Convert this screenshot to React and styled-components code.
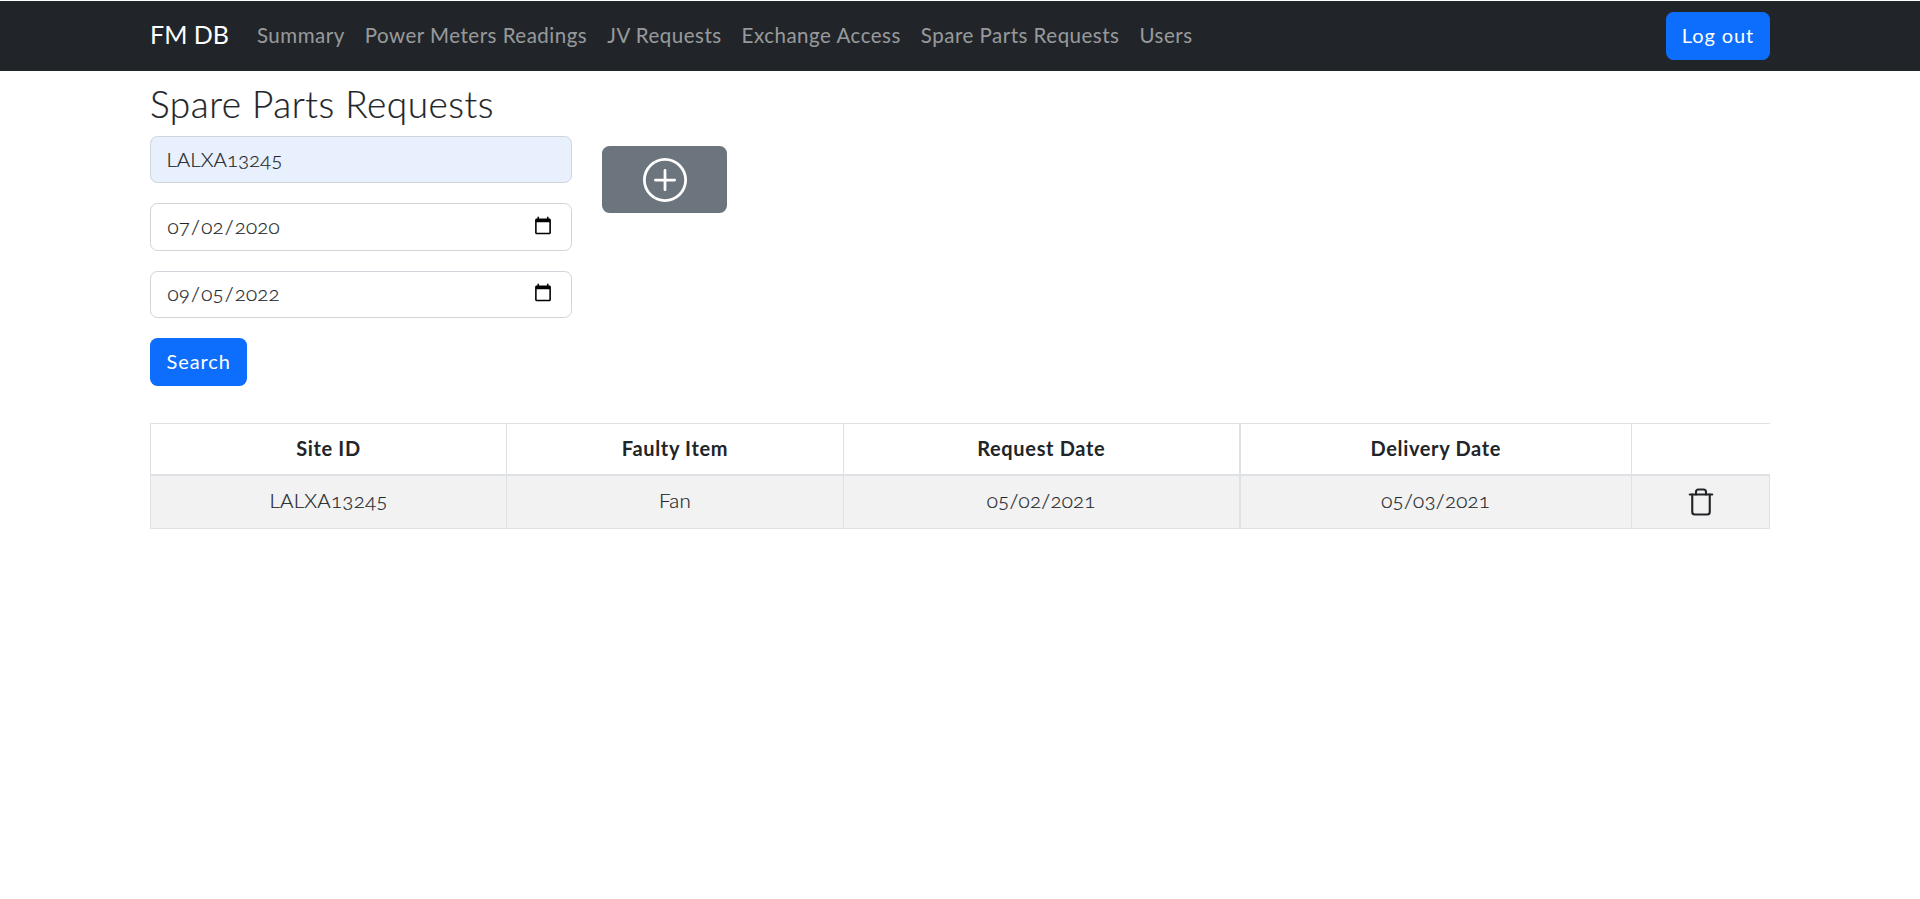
import React from 'react'
import styled, { createGlobalStyle } from 'styled-components'
import { BsPlusCircle } from 'react-icons/bs'
import { Trash } from 'lucide-react'

const GlobalStyle = createGlobalStyle`
    html { font-size: 20px; }
    body {
        margin: 0;
        background: #fff;
        color: #212529;
        font-family: Lato, "Open Sans", sans-serif;
        font-size: 20px;
        line-height: 1.5;
        font-variant-numeric: oldstyle-nums;
    }
`

const Navbar = styled.nav`
    margin-top: 1px;
    height: 70px;
    background-color: #212529;
`

const Container = styled.div`
    width: 1620px;
    margin: 0 auto;
`

const NavInner = styled(Container)`
    height: 100%;
    display: flex;
    align-items: center;
`

const Brand = styled.a`
    color: #fff;
    font-size: 25px;
    margin-right: 18px;
    padding-bottom: 2px;
`

const NavLink = styled.a`
    color: rgba(255,255,255,0.55);
    padding: 0 10px 2px;
    font-size: 20.5px;
    letter-spacing: 0.5px;
`

const Button = styled.button`
    height: 48px;
    padding: 0 16.5px 2px;
    border: none;
    border-radius: 7.5px;
    color: #fff;
    background-color: #0d6efd;
    font: inherit;
    letter-spacing: 0.9px;
`

const LogOut = styled(Button)`
    width: 104px;
    margin-left: auto;
    padding: 0 0 2px;
`

const Title = styled.h3`
    margin: 12px 0 11px;
    font-size: 37px;
    font-weight: 300;
    line-height: 42px;
    letter-spacing: 0.5px;
    -webkit-text-stroke: 0.2px;
`

const FormRow = styled.div`
    display: flex;
    align-items: flex-start;
    gap: 30px;
`

const SearchForm = styled.form`
    width: 422px;
    display: flex;
    flex-direction: column;
    align-items: flex-start;
    gap: 20px;
`

const Input = styled.input`
    box-sizing: border-box;
    width: 100%;
    height: 47.33px;
    padding: 0 16px 2px 15.5px;
    border: 1px solid #ced4da;
    border-radius: 7.5px;
    color: #212529;
    background-color: ${props => props.$filled ? '#e8f0fe' : '#fff'};
    font: inherit;
    font-size: 20.5px;
    font-weight: 300;
    font-variant-numeric: oldstyle-nums;
    letter-spacing: ${props => props.$filled ? '0' : '0.2px'};
    -webkit-text-stroke: 0.2px;
`

const AddButton = styled.button`
    width: 125px;
    height: 67px;
    margin-top: 10px;
    padding: 0;
    display: flex;
    align-items: center;
    justify-content: center;
    border: none;
    border-radius: 7.5px;
    color: #fff;
    background-color: #6c757d;
`

const Table = styled.table`
    width: 1619px;
    margin-top: 37px;
    border-collapse: collapse;
    table-layout: fixed;
`

const Th = styled.th`
    box-sizing: border-box;
    height: 52px;
    padding: 8px 10px 10px;
    border: 1px solid #dee2e6;
    border-bottom: 2px solid #dee2e6;
    border-left: ${props => props.$thick ? '2px' : '1px'} solid #dee2e6;
    border-right: ${props => props.$last ? 'none' : '1px solid #dee2e6'};
    font-weight: 700;
    letter-spacing: 0.65px;
`

const Td = styled.td`
    box-sizing: border-box;
    height: 53px;
    padding: 8px 10px 11px;
    border: 1px solid #dee2e6;
    border-left: ${props => props.$thick ? '2px' : '1px'} solid #dee2e6;
    background-color: #f2f2f2;
    color: #212529;
    text-align: center;
    font-size: 20.5px;
    font-weight: 300;
    letter-spacing: 0.25px;
    -webkit-text-stroke: 0.2px;
`

const IconCell = styled(Td)`
    padding: 10px 0;
`

const TrashIcon = styled(Trash)`
    display: block;
    margin: 0 auto;
`

const columns = [
    { label: 'Site ID', width: 356 },
    { label: 'Faulty Item', width: 337 },
    { label: 'Request Date', width: 396 },
    { label: 'Delivery Date', width: 392 },
    { label: '', width: 138 }
]

const row = ['LALXA13245', 'Fan', '05/02/2021', '05/03/2021']

export default function App() {
    return (
        <>
            <GlobalStyle />
            <Navbar>
                <NavInner>
                    <Brand>FM DB</Brand>
                    <NavLink>Summary</NavLink>
                    <NavLink>Power Meters Readings</NavLink>
                    <NavLink>JV Requests</NavLink>
                    <NavLink>Exchange Access</NavLink>
                    <NavLink>Spare Parts Requests</NavLink>
                    <NavLink>Users</NavLink>
                    <LogOut>Log out</LogOut>
                </NavInner>
            </Navbar>
            <Container>
                <Title>Spare Parts Requests</Title>
                <FormRow>
                    <SearchForm>
                        <Input $filled defaultValue="LALXA13245" />
                        <Input type="date" defaultValue="2020-07-02" />
                        <Input type="date" defaultValue="2022-09-05" />
                        <Button type="button">Search</Button>
                    </SearchForm>
                    <AddButton><BsPlusCircle size={44} /></AddButton>
                </FormRow>
                <Table>
                    <colgroup>
                        {columns.map(c => <col key={c.label} width={c.width} />)}
                    </colgroup>
                    <thead>
                        <tr>
                            {columns.map((c, i) => (
                                <Th key={c.label} $thick={i === 3} $last={i === columns.length - 1}>{c.label}</Th>
                            ))}
                        </tr>
                    </thead>
                    <tbody>
                        <tr>
                            {row.map((v, i) => <Td key={v} $thick={i === 3}>{v}</Td>)}
                            <IconCell><TrashIcon size={30} strokeWidth={1.7} /></IconCell>
                        </tr>
                    </tbody>
                </Table>
            </Container>
        </>
    )
}
